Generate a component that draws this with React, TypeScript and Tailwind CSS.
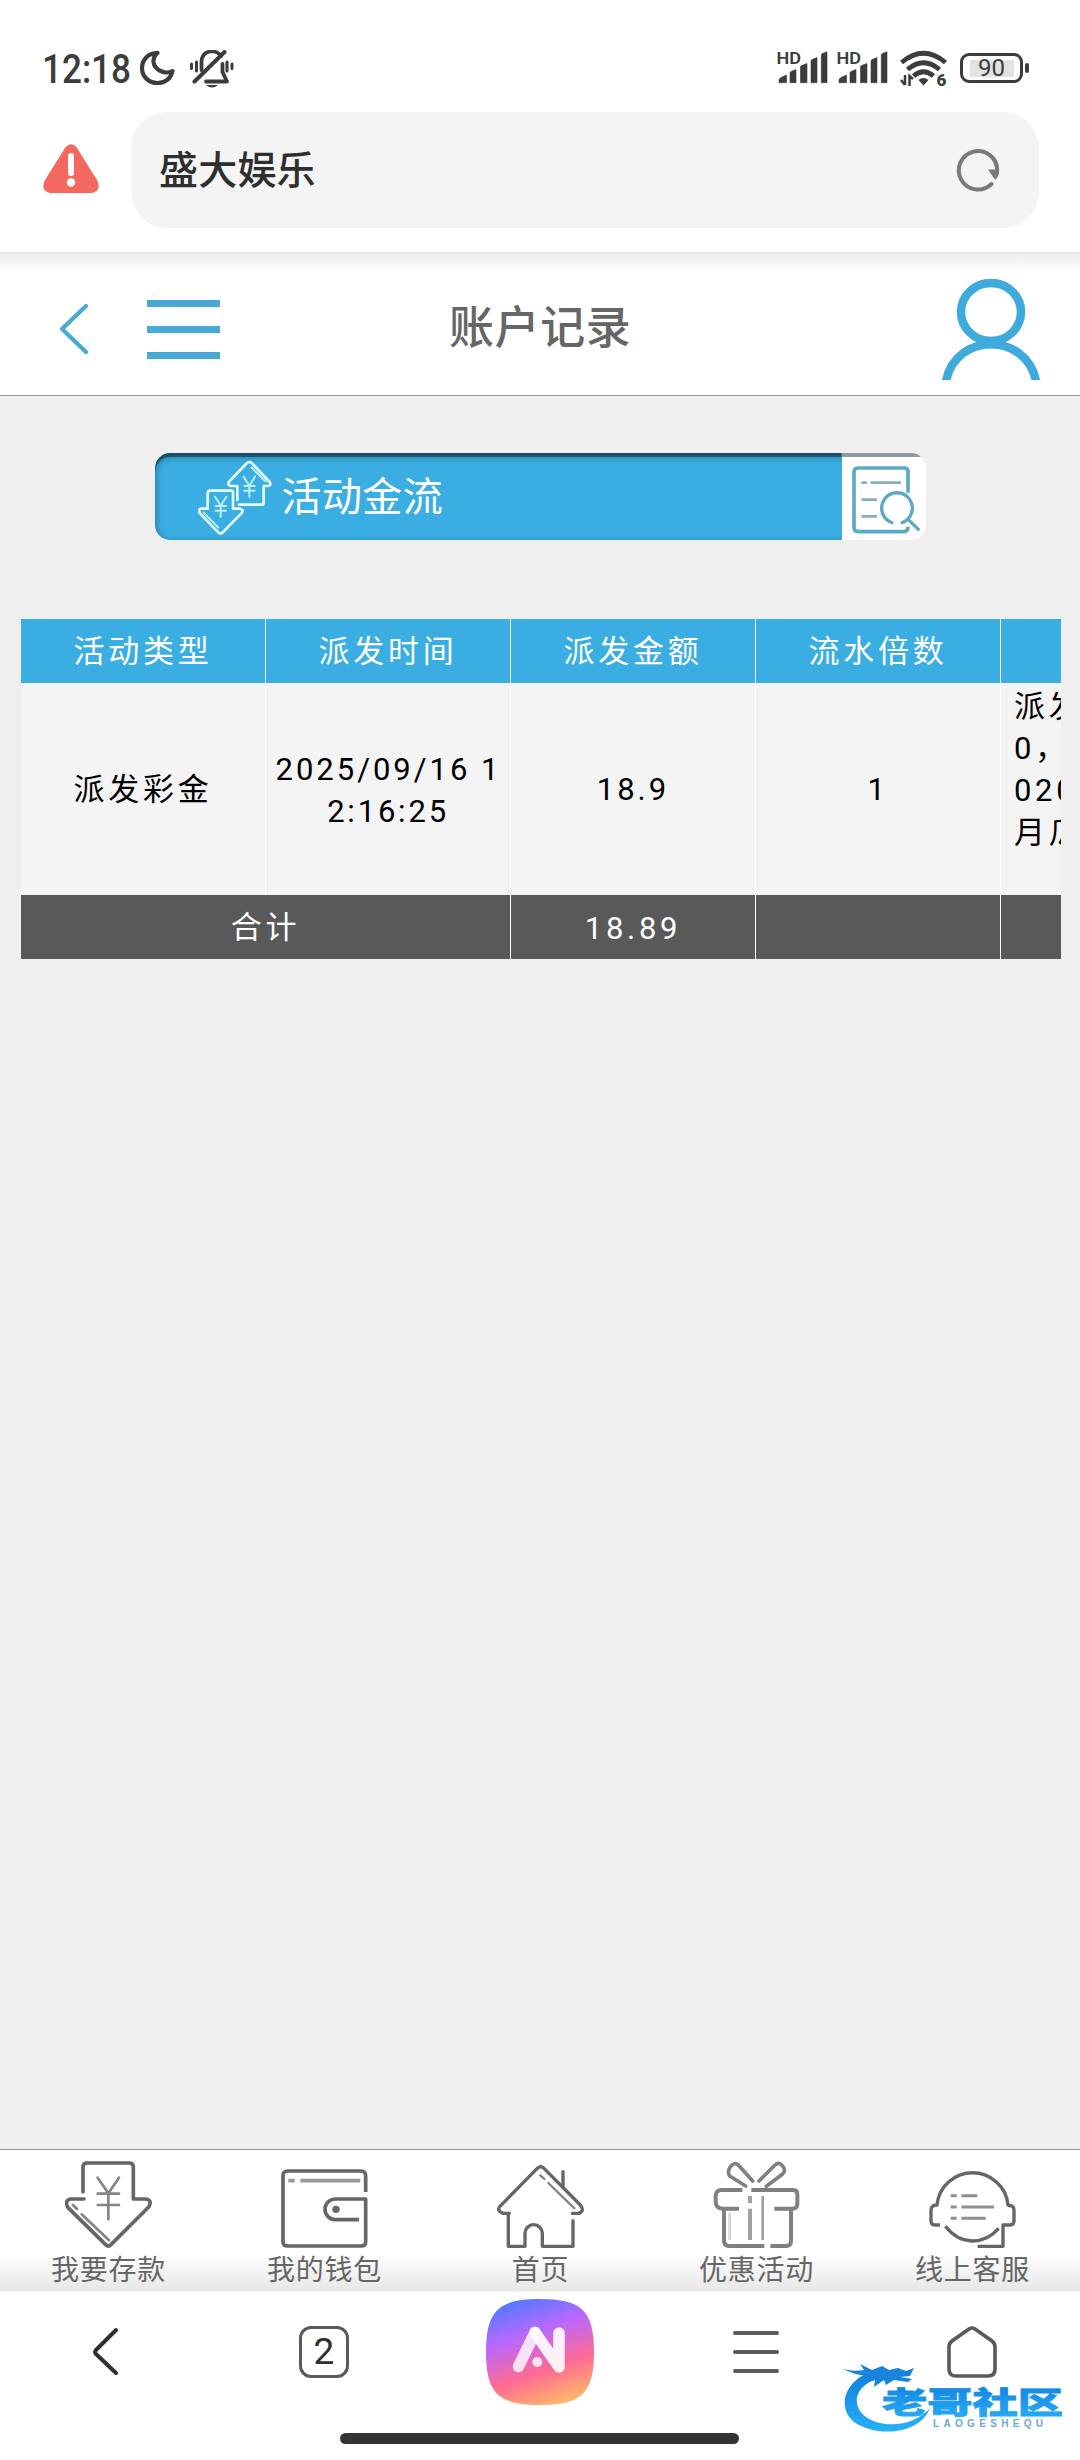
import React from 'react'

const columns = ['活动类型', '派发时间', '派发金额', '流水倍数']

const remarkLines = ['派发', '0，', '020', '月瓜']

function DepositIcon() {
  return (
    <>
      <path d="M54 93V18Q54 6 66 6H192Q205 6 205 18V114H243Q263 118 251 138L138 251Q130 259 122 251L9 140Q-3 118 17 114H57" strokeWidth="11" />
      <path d="M98 50L130 97L162 50M130 97V175M98 98H162M98 132H162" stroke="#858585" strokeWidth="8" />
      <path d="M24 132L36 144M50 160L132 238" stroke="#858585" strokeWidth="8" />
    </>
  )
}

function WalletIcon() {
  return (
    <>
      <path d="M254 93V45Q254 30 240 30H20Q6 30 6 44V242Q6 255 20 255H240Q254 255 254 242V114H163A31 31 0 0 0 163 176H234" strokeWidth="11" strokeLinecap="butt" />
      <circle cx="165" cy="145" r="11" fill="#666" stroke="none" />
      <path d="M22 59H41M58 59H238" stroke="#9a9a9a" strokeWidth="11" strokeLinecap="butt" />
    </>
  )
}

function HouseIcon() {
  return (
    <>
      <path d="M37 157H18Q-2 150 9 136L120 23Q130 12 141 22L250 132Q264 150 245 157H226" strokeWidth="10" />
      <path d="M34 157V256H84V217A26 26 0 0 1 136 217V256H228V179M198 32V76" strokeWidth="10" />
      <path d="M130 43L142 54M154 66L232 142" stroke="#858585" strokeWidth="7" />
    </>
  )
}

function GiftIcon() {
  return (
    <g stroke="#808080">
      <path d="M78 143H28Q8 140 8 122V104Q10 87 25 87H88M115 87H240Q253 87 253 100V128Q253 143 238 143H184" strokeWidth="12" strokeLinecap="butt" />
      <path d="M33 143V238Q33 255 48 255H154M172 255H220Q234 255 234 240V143" strokeWidth="12" strokeLinecap="butt" />
      <path d="M98 75L50 45Q42 32 52 17Q64 2 76 12L119 60M138 60L186 12Q198 1 208 14Q221 29 208 40L160 76" strokeWidth="11" />
      <path d="M111 105V126M111 143V237" stroke="#a0a0a0" strokeWidth="12" strokeLinecap="butt" />
      <path d="M149 105V237" stroke="#a0a0a0" strokeWidth="8" strokeLinecap="butt" />
      <path d="M50 155V237" stroke="#d6d6d6" strokeWidth="8" strokeLinecap="butt" />
    </g>
  )
}

function ServiceIcon() {
  return (
    <>
      <path d="M33 192H18Q6 192 6 180V147Q7 132 24 132A107 107 0 0 1 237 132Q255 134 255 147V180Q255 192 243 192H222V256H146" strokeWidth="10" strokeLinecap="butt" />
      <path d="M49 196Q84 240 130 240Q176 240 209 202" strokeWidth="10" strokeLinecap="butt" />
      <path d="M65 104H83M97 104H145M65 138H83M97 138H195M65 172H83M97 172H170" stroke="#8f8f8f" strokeWidth="9" strokeLinecap="butt" />
    </>
  )
}

const tabs = [
  { label: '我要存款', icon: DepositIcon },
  { label: '我的钱包', icon: WalletIcon },
  { label: '首页', icon: HouseIcon },
  { label: '优惠活动', icon: GiftIcon },
  { label: '线上客服', icon: ServiceIcon },
]

function Signal() {
  return (
    <svg className="h-[36px] w-[52px] overflow-visible" viewBox="0 0 52 36" fill="#3c3c3c">
      <text x="-.5" y="14" fontSize="17" fontWeight="600" textLength="24.500" lengthAdjust="spacingAndGlyphs" fontFamily="Roboto">HD</text>
      <path d="M2 32.700V30Q2 28.500 4 27.500L9.500 25V32.700ZM13 32.700V23Q13 22 14 21.500L19 19.500V32.700ZM23.500 32.700V17Q23.500 16 24.500 15.500L30 13.500V32.700ZM34 32.700V11Q34 10 35 9.500L40 7.500V32.700ZM44.300 32.700V5Q44.300 4 45.300 3.500L50 1.700V32.700Z" stroke="#3c3c3c" strokeWidth=".6" strokeLinejoin="round" />
    </svg>
  )
}

function StatusBar() {
  return (
    <div className="flex h-[112px] items-start pt-[50px] text-[#3c3c3c]">
      <svg className="ml-[42px] h-[38px] w-[98px] overflow-visible" viewBox="0 0 98 38" fill="#3c3c3c">
        <text x="0" y="33" fontSize="40" fontWeight="500" textLength="89" lengthAdjust="spacingAndGlyphs" fontFamily="Roboto">12:18</text>
      </svg>
      <svg className="h-[38px] w-[36px]" viewBox="0 0 36 38" fill="none" stroke="#3c3c3c" strokeWidth="4.200" strokeLinejoin="round">
        <path d="M17.500 2.800C8 3 2 10 2 18C2 27 9 33 17.500 33C25 33 31 28.500 32.500 21C25 25 14.500 20 13.500 12C13.200 8 15 5 17.500 2.800Z" />
      </svg>
      <svg className="ml-[13px] h-[40px] w-[46px]" viewBox="0 0 46 40" fill="none" stroke="#3c3c3c" strokeLinecap="round" strokeWidth="3.800">
        <path d="M2.500 14V18.500M7.500 12V21M38 12V21M43 14V18.500" strokeWidth="3" />
        <path d="M12.500 20V12C13 -1 28 -1 32 6" />
        <path d="M5.500 31.500L35.500 2" strokeWidth="4" />
        <path d="M17 31.500H38L33.500 22V14" strokeLinejoin="round" />
        <path d="M17 35H29Q23 40 17 35Z" fill="#3c3c3c" stroke="none" />
      </svg>
      <div className="ml-[542px] flex gap-2">
        <Signal />
        <Signal />
      </div>
      <svg className="ml-[11px] h-[38px] w-[50px] overflow-visible" viewBox="0 0 50 38" fill="none" stroke="#3c3c3c" strokeWidth="4.800">
        <path d="M1.500 12.500Q23.500 -6 45.500 12.500M7.500 19.500Q23.500 6 39.500 19.500M13.500 26Q23.500 17.500 33.500 26" />
        <path d="M18.500 30Q23.500 26 28.500 30L23.500 35.500Z" fill="#3c3c3c" stroke="none" />
        <path d="M5 35V25M1 30L5 35M9.500 36V26L13 29" strokeWidth="2.500" />
        <text x="36.500" y="35.500" fontSize="17" fontWeight="900" fill="#3c3c3c" stroke="none" fontFamily="Roboto">6</text>
      </svg>
      <div className="ml-[10px] mt-[3px] flex items-center gap-[2px]">
        <div className="flex h-[30px] w-[63px] items-center justify-center rounded-[9px] border-[3px] border-[#3c3c3c]">
          <div className="flex h-[17px] w-[44px] items-center justify-center bg-[#e2e2e2]">
            <span className="font-[Roboto] text-[24px] leading-[28px]">90</span>
          </div>
        </div>
        <div className="h-[10px] w-[4px] rounded-sm bg-[#3c3c3c]" />
      </div>
    </div>
  )
}

function AddressBar() {
  return (
    <div className="flex h-[140px] items-start">
      <svg className="ml-[43px] mt-[32px] h-[50px] w-[56px] shrink-0" viewBox="0 0 56 50">
        <path d="M22 4Q28 -3.500 34 4L54 36Q59 47 49 49H7Q-3 47 2 36Z" fill="#f4695f" />
        <path d="M28 12V29" stroke="#fff" strokeWidth="6" strokeLinecap="round" />
        <circle cx="28" cy="38.500" r="4.200" fill="#fff" />
      </svg>
      <div className="ml-[32px] flex h-[116px] w-[908px] items-center justify-between rounded-[36px] bg-[#f4f4f4] pr-[38px] pl-[28px]">
        <span className="pt-[2px] text-[39px] leading-[56px] font-medium tracking-[.2px] text-[#2e2e2e]">盛大娱乐</span>
        <svg className="h-[46px] w-[46px]" viewBox="0 0 46 46">
          <path d="M36.500 37A19.200 19.200 0 1 1 42.200 23" fill="none" stroke="#797979" strokeWidth="4" strokeLinecap="round" />
          <path d="M33 22.500H44V27L41 32.500Q39.500 32.500 38 30Z" fill="#797979" />
        </svg>
      </div>
    </div>
  )
}

function PageHeader() {
  return (
    <div className="flex h-[144px] items-start border-b border-[#929292] bg-linear-to-b from-[#e9e9e9] to-white to-[19px]">
      <svg className="ml-[59px] mt-[51px] h-[52px] w-[30px]" viewBox="0 0 30 52" fill="none" stroke="#48a9d6" strokeWidth="4.200" strokeLinecap="round" strokeLinejoin="round">
        <path d="M27 3L3 26L27 49" />
      </svg>
      <div className="mt-[48px] ml-[58px] flex h-[59px] w-[73px] flex-col justify-between">
        <div className="h-[7px] bg-[#48a9d6]" />
        <div className="h-[7px] bg-[#48a9d6]" />
        <div className="h-[7px] bg-[#48a9d6]" />
      </div>
      <h1 className="mt-[44px] ml-[229px] w-[201px] text-[45px] leading-[66px] font-medium tracking-[.6px] text-[#666]">账户记录</h1>
      <svg className="mt-[27px] ml-[291px] h-[101px] w-[100px]" viewBox="0 0 100 101" fill="none" stroke="#3eabdc" strokeWidth="8.500">
        <ellipse cx="50" cy="33" rx="30" ry="29" />
        <path d="M5 102C15 53 85 53 95 102" />
      </svg>
    </div>
  )
}

function FlowButton() {
  return (
    <div className="relative mx-auto mt-[57px] flex h-[87px] w-[771px] overflow-hidden rounded-[15px] bg-white">
      <div className="flex w-[687px] items-center bg-[#3aaee2] pl-[43px]">
        <svg className="mt-[2px] h-[75px] w-[74px]" viewBox="0 0 220 225" fill="none" stroke="#e4fbff" strokeWidth="8" strokeLinecap="round" strokeLinejoin="round">
          <path d="M28 146V100Q28 92 36 92H98Q104 92 104 98V146H125Q138 150 129 160L73 217Q66 224 60 217L5 160Q-2 148 8 146Z" />
          <path d="M117 120V78H98Q84 74 94 63L146 9Q153 2 160 9L214 66Q220 78 208 78H196V128Q196 134 190 134H122" />
          <path d="M50 110L67 137L84 110M67 137V171M52 138H83M52 152H83M136 50L153 77L170 50M153 77V110M138 78H169M138 92H169M16 158L60 203M160 23L202 65" stroke="#bdeefa" strokeWidth="6" />
        </svg>
        <span className="ml-[10px] pt-[2px] text-[40px] leading-[56px] tracking-[.4px] text-white">活动金流</span>
      </div>
      <svg className="mt-[13px] ml-[10px] h-[69px] w-[70px]" viewBox="0 0 210 207" fill="none" stroke="#5ba9c9" strokeWidth="11">
        <path d="M168 80V18Q168 6 157 6H18Q6 6 6 18V184Q6 197 18 197H153Q168 197 168 182" />
        <path d="M124 171A46 46 0 1 1 146 171M169 161L202 193" strokeWidth="10" />
        <path d="M28 50H45M56 50H147M28 101H75M28 151H75" stroke="#87afbd" strokeWidth="8" />
      </svg>
      <div className="absolute inset-0 rounded-[15px] shadow-[inset_0_4px_0_rgba(0,0,0,0.4),inset_0_3px_9px_rgba(0,0,0,0.4)] [clip-path:inset(0_84px_0_0)]" />
      <div className="absolute top-0 right-0 h-[4px] w-[84px] bg-[#929aa1]" />
    </div>
  )
}

function RecordTable() {
  return (
    <div className="mt-[79px] ml-[21px] w-[1040px] overflow-hidden text-[31px] tracking-[3.7px]">
      <div className="grid w-[1225px] grid-cols-5 text-center">
        {columns.map((c) => (
          <div key={c} className="h-[64px] border-r border-white bg-[#3aaee2] pt-[2px] leading-[62px] text-white">{c}</div>
        ))}
        <div className="h-[64px] bg-[#3aaee2]" />

        <div className="flex h-[212px] items-center justify-center border-r border-white bg-[#f4f4f4] pt-[2px] text-black">派发彩金</div>
        <div className="flex h-[212px] flex-col justify-center border-r border-white bg-[#f4f4f4] pt-[3px] leading-[42px] text-black">
          <span className="pl-px tracking-[3px]">2025/09/16 1</span>
          <span className="tracking-[2.8px]">2:16:25</span>
        </div>
        <div className="flex h-[212px] items-center justify-center border-r border-white bg-[#f4f4f4] pt-[3px] text-black">
          <span className="tracking-[3px]">18.9</span>
        </div>
        <div className="flex h-[212px] items-center justify-center border-r border-white bg-[#f4f4f4] pt-[3px] text-black">1</div>
        <div className="flex h-[212px] flex-col bg-[#f4f4f4] pt-[3px] pl-[13px] text-left leading-[42px] text-black">
          {remarkLines.map((line) => (
            <span key={line}>{line}</span>
          ))}
        </div>

        <div className="col-span-2 h-[64px] border-r border-white bg-[#595959] pt-[2px] leading-[62px] text-white">合计</div>
        <div className="h-[64px] border-r border-white bg-[#595959] pt-[3px] leading-[62px] text-white">18.89</div>
        <div className="h-[64px] border-r border-white bg-[#595959]" />
        <div className="h-[64px] bg-[#595959]" />
      </div>
    </div>
  )
}

function TabBar() {
  return (
    <div className="grid h-[142px] grid-cols-5 border-t border-[#929292] bg-linear-to-b from-white from-[104px] to-[#e7e7e7]">
      {tabs.map((tab) => (
        <div key={tab.label} className="flex flex-col items-center">
          <svg className="mt-[11px] h-[87px] w-[87px]" viewBox="0 0 261 261" fill="none" stroke="#666" strokeLinecap="round" strokeLinejoin="round">
            <tab.icon />
          </svg>
          <span className="mt-[4px] pl-px text-[28px] leading-[38px] tracking-[.7px] text-[#666]">{tab.label}</span>
        </div>
      ))}
    </div>
  )
}

function Watermark() {
  return (
    <svg className="absolute top-[60px] left-[840px] h-[90px] w-[230px]" viewBox="0 0 230 90">
      <defs>
        <linearGradient id="wm" x1="0" y1="0" x2="0" y2="1">
          <stop offset="0" stopColor="#0f7ddc" />
          <stop offset="1" stopColor="#27b1fa" />
        </linearGradient>
      </defs>
      <path d="M34 18C5 26 -4 54 14 69C35 84 79 83 90 55C76 72 45 77 26 64C8 50 18 29 42 25Z" fill="url(#wm)" />
      <path d="M2 15Q10 19 24 17L20 11L32 17L42 13L49 17L58 15L66 18L74 15L70 23L60 24L72 26L68 29L54 27L46 32L44 27L34 34L35 27L26 29L30 23Q12 22 2 15Z" fill="#1683dc" />
      <text x="42" y="60" fontSize="30" fontWeight="900" textLength="181" lengthAdjust="spacingAndGlyphs" fill="url(#wm)" stroke="url(#wm)" strokeWidth=".8" fontFamily="Noto Sans CJK SC">老哥社区</text>
      <text x="93" y="73.500" fontSize="10" fontWeight="700" textLength="110" fill="#6da9dc" fontFamily="Liberation Sans">LAOGESHEQU</text>
    </svg>
  )
}

function BrowserBar() {
  return (
    <div className="relative h-[169px] border-t-2 border-[#fafafa] bg-white">
      <div className="grid h-[118px] grid-cols-5 items-center justify-items-center">
        <svg className="mr-[4px] h-[50px] w-[28px]" viewBox="0 0 28 50" fill="none" stroke="#303030" strokeWidth="4" strokeLinecap="round" strokeLinejoin="round">
          <path d="M24 3L4 23Q2 25 4 27L24 46" />
        </svg>
        <div className="flex h-[52px] w-[50px] items-center justify-center rounded-[12px] border-[3.500px] border-[#5a5a5a] font-[Roboto] text-[37px] leading-[40px] text-[#303030]">2</div>
        <svg className="h-[106px] w-[108px]" viewBox="0 0 108 106">
          <defs>
            <linearGradient id="ai" x1=".25" y1="0" x2=".6" y2="1">
              <stop offset="0" stopColor="#4f7bff" />
              <stop offset=".33" stopColor="#b768ff" />
              <stop offset=".7" stopColor="#ff6b92" />
              <stop offset="1" stopColor="#ffb36b" />
            </linearGradient>
          </defs>
          <path d="M54 0C96 0 108 12 108 53C108 94 96 106 54 106C12 106 0 94 0 53C0 12 12 0 54 0Z" fill="url(#ai)" />
          <g fill="none" stroke="#fff" strokeWidth="11.500" strokeLinecap="round" strokeLinejoin="round">
            <path d="M32.500 67.500L49 33.500" opacity=".8" />
            <path d="M73 34V68L49 33.500" opacity=".9" />
          </g>
          <circle cx="51.300" cy="63" r="5" fill="#ffe3f0" />
        </svg>
        <svg className="h-[42px] w-[46px]" viewBox="0 0 46 42" stroke="#5a5a5a" strokeWidth="4" strokeLinecap="round">
          <path d="M2 2H44M2 21H44M2 40H44" />
        </svg>
        <svg className="h-[52px] w-[50px]" viewBox="0 0 50 52" fill="none" stroke="#5a5a5a" strokeWidth="3.600">
          <path d="M22 3Q25 1 28 3L45 15Q48 17.500 48 21V43Q48 50 41 50H9Q2 50 2 43V21Q2 17.500 5 15Z" />
        </svg>
      </div>
      <div className="mt-[22px] ml-[340px] h-[11px] w-[399px] rounded-full bg-[#333]" />
      <Watermark />
    </div>
  )
}

export default function App() {
  return (
    <div className="flex h-[2460px] w-[1080px] flex-col overflow-hidden bg-white font-[Roboto,'Noto_Sans_CJK_SC',sans-serif]">
      <StatusBar />
      <AddressBar />
      <PageHeader />
      <div className="flex-1 bg-[#efefef]">
        <FlowButton />
        <RecordTable />
      </div>
      <TabBar />
      <BrowserBar />
    </div>
  )
}
